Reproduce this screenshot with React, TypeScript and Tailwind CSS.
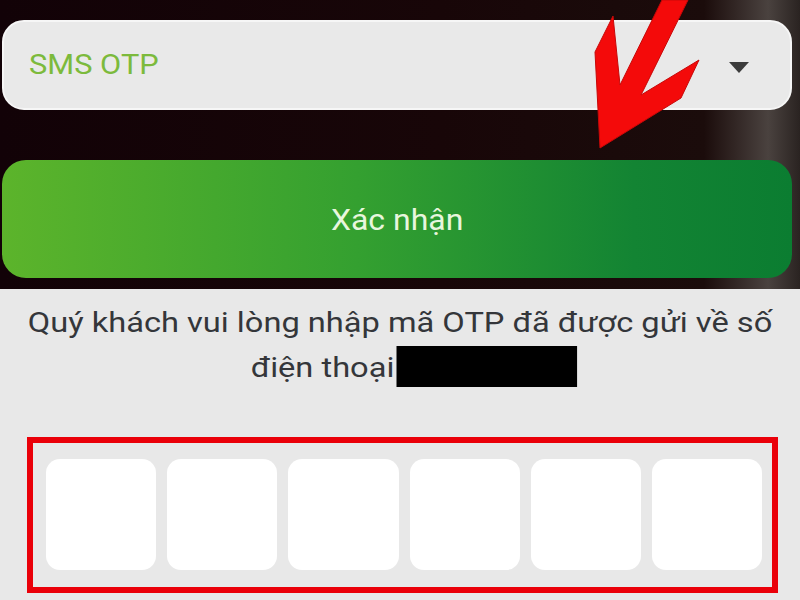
import React from "react"

// OTP confirmation screen: method picker, confirm button and 6-digit code input
const digits = [0, 1, 2, 3, 4, 5]

function Caret() {
  return (
    <svg className="mt-[4px]" width="22" height="13" viewBox="0 0 22 13">
      <path d="M1 1 L21 1 L11 12 Z" fill="#3c3c3c" />
    </svg>
  )
}

function Pointer() {
  return (
    <svg
      className="pointer-events-none absolute left-0 top-0"
      width="800"
      height="289"
      viewBox="0 0 800 289"
    >
      <polygon
        points="662,0 688,0 641,95 699,60 681,98 600,148 595,52 613,16 620,85"
        fill="#f40a0a"
        stroke="#c80808"
        strokeWidth="1"
      />
    </svg>
  )
}

export default function App() {
  return (
    <div className="flex h-[600px] w-[800px] flex-col overflow-hidden font-['Roboto',sans-serif]">
      {/* Dark top area */}
      <div className="relative h-[289px] shrink-0 bg-[linear-gradient(90deg,#120207_0%,#180608_55%,#1b0c0b_88%,#4a423f_96%,#2a2321_100%)] pl-[2px] pr-[8px] pt-[20px]">
        <div className="flex h-[90px] items-center justify-between rounded-[22px] border-2 border-[#f6f6f6] bg-[#e9e9e9] pl-[25px] pr-[40px]">
          <span className="inline-block origin-left scale-x-[1.1] text-[28px] text-[#7cba3c]">SMS OTP</span>
          <Caret />
        </div>

        <button className="mt-[50px] flex h-[118px] w-full items-center justify-center rounded-[24px] bg-[linear-gradient(90deg,#5cb42b_0%,#34a030_45%,#138433_80%,#0b7d31_100%)] text-[30px] text-[#e8f6de]">
          <span className="inline-block scale-x-[1.065]">Xác nhận</span>
        </button>

        <Pointer />
      </div>

      {/* Code entry */}
      <div className="flex-1 bg-[#e8e8e8] pt-[11px]">
        <p className="scale-x-[1.165] px-8 text-center text-[28px] leading-[45px] text-[#34363a]">
          Quý khách vui lòng nhập mã OTP đã được gửi về số
          <br />
          <span className="inline-block pl-[24px]">
            điện thoại
            <span className="ml-[2px] inline-block h-[41px] w-[155px] bg-black align-[-10px]" />
          </span>
        </p>

        <div className="ml-[27px] mt-[47px] flex h-[156px] w-[751px] gap-[11px] border-[6px] border-[#ea0009] pl-[13px] pr-[10px] pt-[16px]">
          {digits.map((d) => (
            <div key={d} className="h-[111px] flex-1 rounded-[14px] bg-white" />
          ))}
        </div>
      </div>
    </div>
  )
}
